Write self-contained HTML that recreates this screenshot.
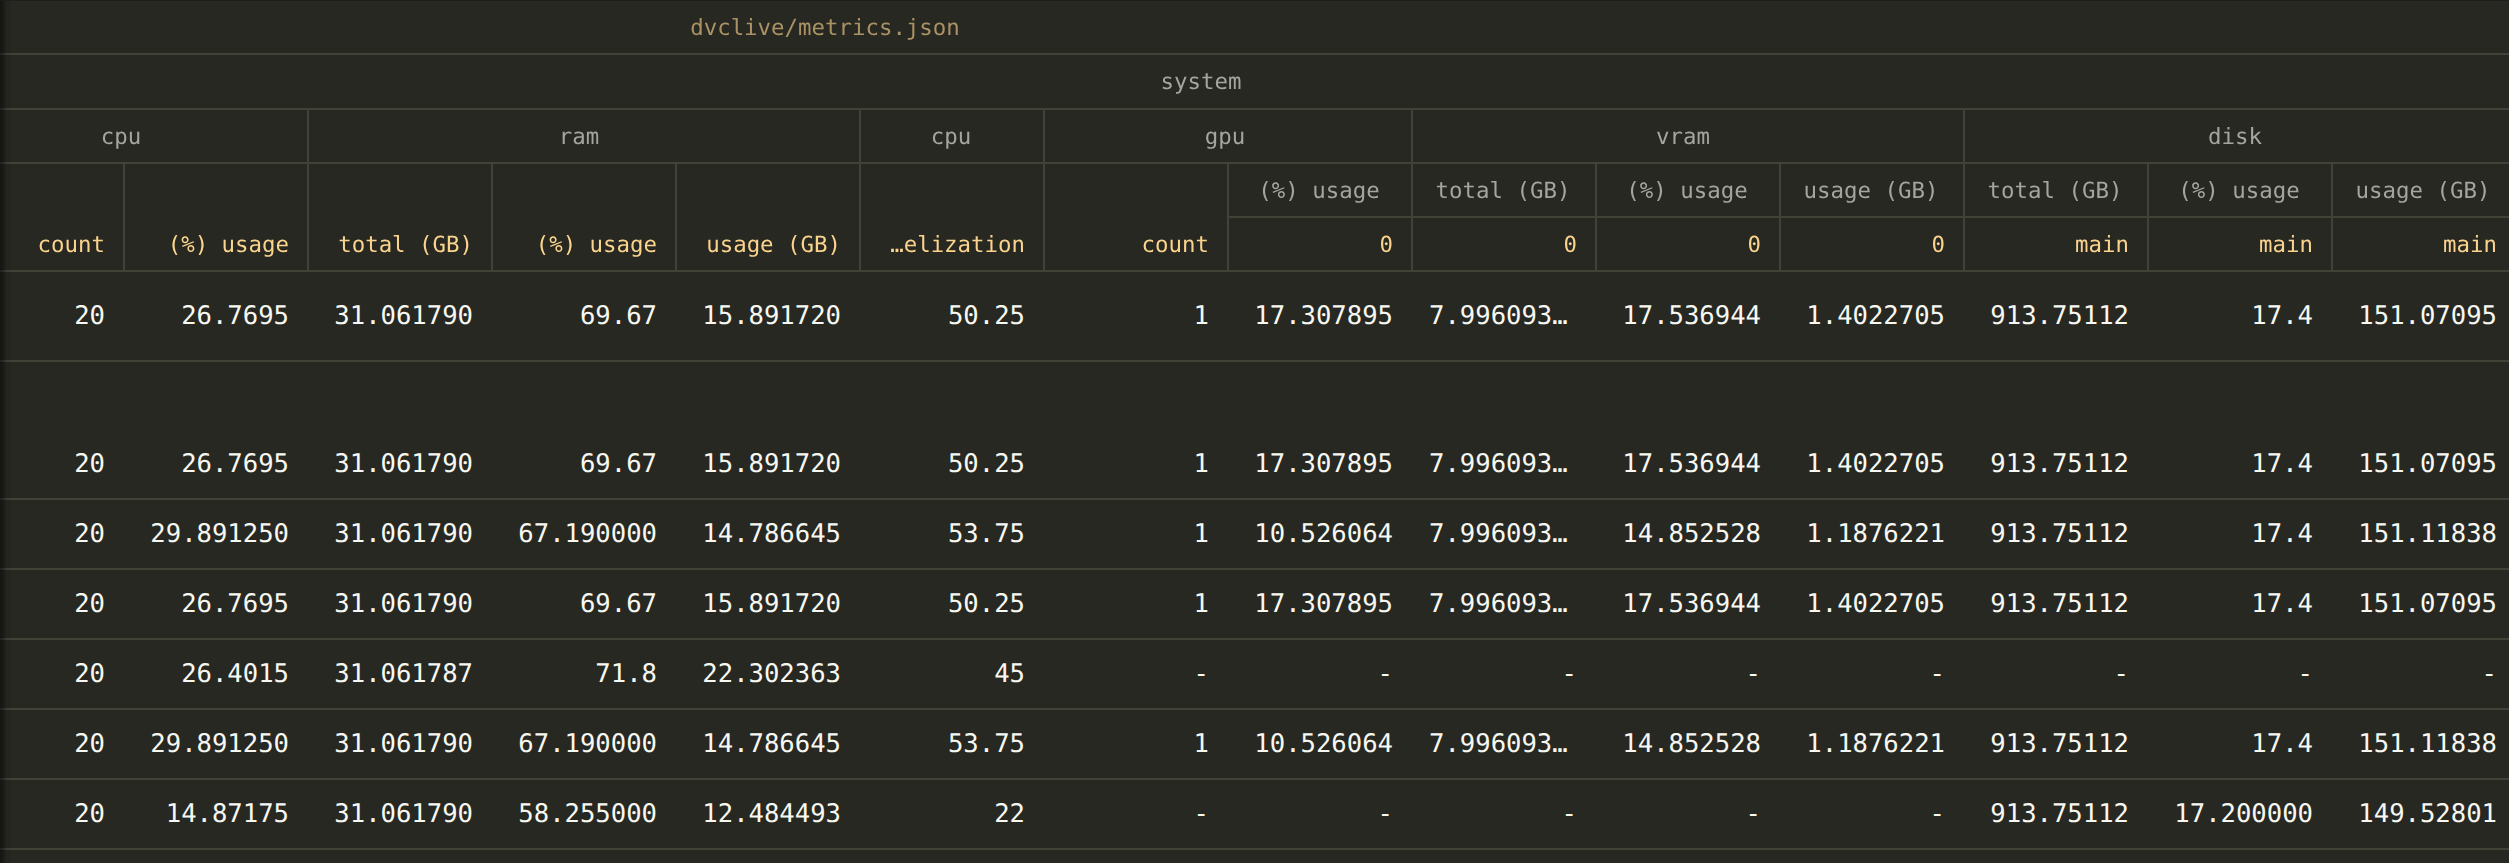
<!DOCTYPE html>
<html><head><meta charset="utf-8"><title>experiments</title>
<style>
html,body{margin:0;padding:0;background:#272822;}
body{width:2509px;height:863px;overflow:hidden;position:relative;font-family:"DejaVu Sans Mono","Liberation Mono",monospace;text-rendering:geometricPrecision;}
.l{position:absolute;display:block;background:#414339;}
.t{position:absolute;white-space:pre;display:block;}
.c{text-align:center;}
.r{text-align:right;}
.h{will-change:transform;font-size:22.4px;line-height:54px;height:54px;}
.d{font-size:25.6px;line-height:40px;height:40px;color:#f8f8f2;}
.top{color:#ab9265;}
.g{color:#a4a59f;}
.lf{color:#fad38d;}
.sh{position:absolute;left:0;top:0;width:11px;height:863px;background:linear-gradient(to right,rgba(0,0,0,.42) 0 3px,rgba(0,0,0,.26) 3px 5px,rgba(0,0,0,.12) 5px 7px,rgba(0,0,0,.05) 7px 11px);}
.tp{position:absolute;left:0;top:0;width:2509px;height:1px;background:#1e1f1c;}
</style></head><body>
<i class="l" style="left:0px;top:53px;width:2509px;height:2px"></i>
<i class="l" style="left:0px;top:108px;width:2509px;height:2px"></i>
<i class="l" style="left:0px;top:162px;width:2509px;height:2px"></i>
<i class="l" style="left:0px;top:270px;width:2509px;height:2px"></i>
<i class="l" style="left:0px;top:360px;width:2509px;height:2px"></i>
<i class="l" style="left:0px;top:498px;width:2509px;height:2px"></i>
<i class="l" style="left:0px;top:568px;width:2509px;height:2px"></i>
<i class="l" style="left:0px;top:638px;width:2509px;height:2px"></i>
<i class="l" style="left:0px;top:708px;width:2509px;height:2px"></i>
<i class="l" style="left:0px;top:778px;width:2509px;height:2px"></i>
<i class="l" style="left:0px;top:848px;width:2509px;height:2px"></i>
<i class="l" style="left:1229px;top:216px;width:1280px;height:2px"></i>
<i class="l" style="left:307px;top:110px;width:2px;height:160px"></i>
<i class="l" style="left:859px;top:110px;width:2px;height:160px"></i>
<i class="l" style="left:1043px;top:110px;width:2px;height:160px"></i>
<i class="l" style="left:1411px;top:110px;width:2px;height:160px"></i>
<i class="l" style="left:1963px;top:110px;width:2px;height:160px"></i>
<i class="l" style="left:123px;top:164px;width:2px;height:106px"></i>
<i class="l" style="left:491px;top:164px;width:2px;height:106px"></i>
<i class="l" style="left:675px;top:164px;width:2px;height:106px"></i>
<i class="l" style="left:1227px;top:164px;width:2px;height:106px"></i>
<i class="l" style="left:1595px;top:164px;width:2px;height:106px"></i>
<i class="l" style="left:1779px;top:164px;width:2px;height:106px"></i>
<i class="l" style="left:2147px;top:164px;width:2px;height:106px"></i>
<i class="l" style="left:2331px;top:164px;width:2px;height:106px"></i>
<span class="t c h top" style="left:525px;width:600px;top:1px">dvclive/metrics.json</span>
<span class="t c h g" style="left:901px;width:600px;top:55px">system</span>
<span class="t c h g" style="left:-179px;width:600px;top:110px">cpu</span>
<span class="t c h g" style="left:279px;width:600px;top:110px">ram</span>
<span class="t c h g" style="left:651px;width:600px;top:110px">cpu</span>
<span class="t c h g" style="left:925px;width:600px;top:110px">gpu</span>
<span class="t c h g" style="left:1383px;width:600px;top:110px">vram</span>
<span class="t c h g" style="left:1935px;width:600px;top:110px">disk</span>
<span class="t c h g" style="left:1018.5px;width:600px;top:164px">(%) usage</span>
<span class="t c h g" style="left:1202.5px;width:600px;top:164px">total (GB)</span>
<span class="t c h g" style="left:1386.5px;width:600px;top:164px">(%) usage</span>
<span class="t c h g" style="left:1570.5px;width:600px;top:164px">usage (GB)</span>
<span class="t c h g" style="left:1754.5px;width:600px;top:164px">total (GB)</span>
<span class="t c h g" style="left:1938.5px;width:600px;top:164px">(%) usage</span>
<span class="t c h g" style="left:2122.5px;width:600px;top:164px">usage (GB)</span>
<span class="t r h lf" style="left:-59px;width:164px;top:218px">count</span>
<span class="t r h lf" style="left:125px;width:164px;top:218px">(%) usage</span>
<span class="t r h lf" style="left:309px;width:164px;top:218px">total (GB)</span>
<span class="t r h lf" style="left:493px;width:164px;top:218px">(%) usage</span>
<span class="t r h lf" style="left:677px;width:164px;top:218px">usage (GB)</span>
<span class="t r h lf" style="left:861px;width:164px;top:218px">…elization</span>
<span class="t r h lf" style="left:1045px;width:164px;top:218px">count</span>
<span class="t r h lf" style="left:1229px;width:164px;top:218px">0</span>
<span class="t r h lf" style="left:1413px;width:164px;top:218px">0</span>
<span class="t r h lf" style="left:1597px;width:164px;top:218px">0</span>
<span class="t r h lf" style="left:1781px;width:164px;top:218px">0</span>
<span class="t r h lf" style="left:1965px;width:164px;top:218px">main</span>
<span class="t r h lf" style="left:2149px;width:164px;top:218px">main</span>
<span class="t r h lf" style="left:2333px;width:164px;top:218px">main</span>
<span class="t r d" style="left:-59px;width:164px;top:296px">20</span>
<span class="t r d" style="left:125px;width:164px;top:296px">26.7695</span>
<span class="t r d" style="left:309px;width:164px;top:296px">31.061790</span>
<span class="t r d" style="left:493px;width:164px;top:296px">69.67</span>
<span class="t r d" style="left:677px;width:164px;top:296px">15.891720</span>
<span class="t r d" style="left:861px;width:164px;top:296px">50.25</span>
<span class="t r d" style="left:1045px;width:164px;top:296px">1</span>
<span class="t r d" style="left:1229px;width:164px;top:296px">17.307895</span>
<span class="t d" style="left:1429px;top:296px">7.996093…</span>
<span class="t r d" style="left:1597px;width:164px;top:296px">17.536944</span>
<span class="t r d" style="left:1781px;width:164px;top:296px">1.4022705</span>
<span class="t r d" style="left:1965px;width:164px;top:296px">913.75112</span>
<span class="t r d" style="left:2149px;width:164px;top:296px">17.4</span>
<span class="t r d" style="left:2333px;width:164px;top:296px">151.07095</span>
<span class="t r d" style="left:-59px;width:164px;top:444px">20</span>
<span class="t r d" style="left:125px;width:164px;top:444px">26.7695</span>
<span class="t r d" style="left:309px;width:164px;top:444px">31.061790</span>
<span class="t r d" style="left:493px;width:164px;top:444px">69.67</span>
<span class="t r d" style="left:677px;width:164px;top:444px">15.891720</span>
<span class="t r d" style="left:861px;width:164px;top:444px">50.25</span>
<span class="t r d" style="left:1045px;width:164px;top:444px">1</span>
<span class="t r d" style="left:1229px;width:164px;top:444px">17.307895</span>
<span class="t d" style="left:1429px;top:444px">7.996093…</span>
<span class="t r d" style="left:1597px;width:164px;top:444px">17.536944</span>
<span class="t r d" style="left:1781px;width:164px;top:444px">1.4022705</span>
<span class="t r d" style="left:1965px;width:164px;top:444px">913.75112</span>
<span class="t r d" style="left:2149px;width:164px;top:444px">17.4</span>
<span class="t r d" style="left:2333px;width:164px;top:444px">151.07095</span>
<span class="t r d" style="left:-59px;width:164px;top:514px">20</span>
<span class="t r d" style="left:125px;width:164px;top:514px">29.891250</span>
<span class="t r d" style="left:309px;width:164px;top:514px">31.061790</span>
<span class="t r d" style="left:493px;width:164px;top:514px">67.190000</span>
<span class="t r d" style="left:677px;width:164px;top:514px">14.786645</span>
<span class="t r d" style="left:861px;width:164px;top:514px">53.75</span>
<span class="t r d" style="left:1045px;width:164px;top:514px">1</span>
<span class="t r d" style="left:1229px;width:164px;top:514px">10.526064</span>
<span class="t d" style="left:1429px;top:514px">7.996093…</span>
<span class="t r d" style="left:1597px;width:164px;top:514px">14.852528</span>
<span class="t r d" style="left:1781px;width:164px;top:514px">1.1876221</span>
<span class="t r d" style="left:1965px;width:164px;top:514px">913.75112</span>
<span class="t r d" style="left:2149px;width:164px;top:514px">17.4</span>
<span class="t r d" style="left:2333px;width:164px;top:514px">151.11838</span>
<span class="t r d" style="left:-59px;width:164px;top:584px">20</span>
<span class="t r d" style="left:125px;width:164px;top:584px">26.7695</span>
<span class="t r d" style="left:309px;width:164px;top:584px">31.061790</span>
<span class="t r d" style="left:493px;width:164px;top:584px">69.67</span>
<span class="t r d" style="left:677px;width:164px;top:584px">15.891720</span>
<span class="t r d" style="left:861px;width:164px;top:584px">50.25</span>
<span class="t r d" style="left:1045px;width:164px;top:584px">1</span>
<span class="t r d" style="left:1229px;width:164px;top:584px">17.307895</span>
<span class="t d" style="left:1429px;top:584px">7.996093…</span>
<span class="t r d" style="left:1597px;width:164px;top:584px">17.536944</span>
<span class="t r d" style="left:1781px;width:164px;top:584px">1.4022705</span>
<span class="t r d" style="left:1965px;width:164px;top:584px">913.75112</span>
<span class="t r d" style="left:2149px;width:164px;top:584px">17.4</span>
<span class="t r d" style="left:2333px;width:164px;top:584px">151.07095</span>
<span class="t r d" style="left:-59px;width:164px;top:654px">20</span>
<span class="t r d" style="left:125px;width:164px;top:654px">26.4015</span>
<span class="t r d" style="left:309px;width:164px;top:654px">31.061787</span>
<span class="t r d" style="left:493px;width:164px;top:654px">71.8</span>
<span class="t r d" style="left:677px;width:164px;top:654px">22.302363</span>
<span class="t r d" style="left:861px;width:164px;top:654px">45</span>
<span class="t r d" style="left:1045px;width:164px;top:654px">-</span>
<span class="t r d" style="left:1229px;width:164px;top:654px">-</span>
<span class="t r d" style="left:1413px;width:164px;top:654px">-</span>
<span class="t r d" style="left:1597px;width:164px;top:654px">-</span>
<span class="t r d" style="left:1781px;width:164px;top:654px">-</span>
<span class="t r d" style="left:1965px;width:164px;top:654px">-</span>
<span class="t r d" style="left:2149px;width:164px;top:654px">-</span>
<span class="t r d" style="left:2333px;width:164px;top:654px">-</span>
<span class="t r d" style="left:-59px;width:164px;top:724px">20</span>
<span class="t r d" style="left:125px;width:164px;top:724px">29.891250</span>
<span class="t r d" style="left:309px;width:164px;top:724px">31.061790</span>
<span class="t r d" style="left:493px;width:164px;top:724px">67.190000</span>
<span class="t r d" style="left:677px;width:164px;top:724px">14.786645</span>
<span class="t r d" style="left:861px;width:164px;top:724px">53.75</span>
<span class="t r d" style="left:1045px;width:164px;top:724px">1</span>
<span class="t r d" style="left:1229px;width:164px;top:724px">10.526064</span>
<span class="t d" style="left:1429px;top:724px">7.996093…</span>
<span class="t r d" style="left:1597px;width:164px;top:724px">14.852528</span>
<span class="t r d" style="left:1781px;width:164px;top:724px">1.1876221</span>
<span class="t r d" style="left:1965px;width:164px;top:724px">913.75112</span>
<span class="t r d" style="left:2149px;width:164px;top:724px">17.4</span>
<span class="t r d" style="left:2333px;width:164px;top:724px">151.11838</span>
<span class="t r d" style="left:-59px;width:164px;top:794px">20</span>
<span class="t r d" style="left:125px;width:164px;top:794px">14.87175</span>
<span class="t r d" style="left:309px;width:164px;top:794px">31.061790</span>
<span class="t r d" style="left:493px;width:164px;top:794px">58.255000</span>
<span class="t r d" style="left:677px;width:164px;top:794px">12.484493</span>
<span class="t r d" style="left:861px;width:164px;top:794px">22</span>
<span class="t r d" style="left:1045px;width:164px;top:794px">-</span>
<span class="t r d" style="left:1229px;width:164px;top:794px">-</span>
<span class="t r d" style="left:1413px;width:164px;top:794px">-</span>
<span class="t r d" style="left:1597px;width:164px;top:794px">-</span>
<span class="t r d" style="left:1781px;width:164px;top:794px">-</span>
<span class="t r d" style="left:1965px;width:164px;top:794px">913.75112</span>
<span class="t r d" style="left:2149px;width:164px;top:794px">17.200000</span>
<span class="t r d" style="left:2333px;width:164px;top:794px">149.52801</span>
<i class="sh"></i><i class="tp"></i>
</body></html>
